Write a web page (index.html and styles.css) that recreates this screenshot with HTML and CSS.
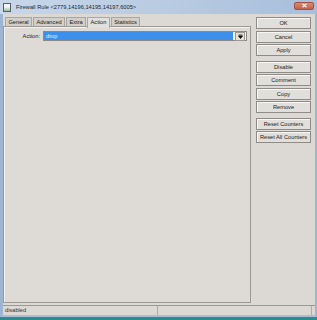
FILE: index.html
```html
<!DOCTYPE html>
<html lang="en">
<head>
    <meta charset="UTF-8">
    <meta name="viewport" content="width=device-width, initial-scale=1.0">
    <title>Firewall Rule</title>
    <link rel="stylesheet" href="styles.css">
</head>
<body>
    <div class="window">
        <div class="titlebar">
            <span class="app-icon"></span>
            <span class="title">Firewall Rule &lt;2779,14196,14195,14197,6005&gt;</span>
            <span class="close-btn">
                <svg width="7" height="5" viewBox="0 0 7 5"><path d="M1.5 0.8 L5.5 4.2 M5.5 0.8 L1.5 4.2" stroke="#fbeeea" stroke-width="1.2"/></svg>
            </span>
        </div>

        <div class="client">
            <div class="main">
                <div class="tabs">
                    <div class="tab">General</div>
                    <div class="tab">Advanced</div>
                    <div class="tab">Extra</div>
                    <div class="tab active">Action</div>
                    <div class="tab">Statistics</div>
                </div>
                <div class="panel">
                    <div class="field-row">
                        <label class="field-label">Action:</label>
                        <div class="select">
                            <span class="select-value">drop</span>
                            <span class="select-arrow">
                                <svg width="5" height="5" viewBox="0 0 5 5"><path d="M0.5 1 H4.5 M0.5 2 L2.5 4.5 L4.5 2 Z" stroke="#111" stroke-width="0.8" fill="#111"/></svg>
                            </span>
                        </div>
                    </div>
                </div>
            </div>

            <div class="sidebar">
                <div class="btn-group">
                    <button class="side-btn">OK</button>
                    <button class="side-btn">Cancel</button>
                    <button class="side-btn">Apply</button>
                </div>
                <div class="btn-group">
                    <button class="side-btn">Disable</button>
                    <button class="side-btn">Comment</button>
                    <button class="side-btn">Copy</button>
                    <button class="side-btn">Remove</button>
                </div>
                <div class="btn-group">
                    <button class="side-btn">Reset Counters</button>
                    <button class="side-btn">Reset All Counters</button>
                </div>
            </div>
        </div>

        <div class="statusbar">
            <div class="status-cell status-main">disabled</div>
            <div class="status-cell status-extra"></div>
            <div class="status-grip"></div>
        </div>
    </div>
    <div class="desktop"></div>
</body>
</html>
```

FILE: styles.css
```css
body {
    margin: 0;
    width: 317px;
    height: 320px;
    overflow: hidden;
    font-family: "Liberation Sans", Arial, sans-serif;
    font-size: 5.7px;
    color: #1a1a1a;
    background-color: #2a8c8c;
}
.window {
    display: flex;
    flex-direction: column;
    height: 315px;
    border-left: 3px solid #9db5d3;
    border-right: 2px solid #9db5d3;
    border-bottom: 2px solid #a9bfd8;
    background-color: #dcd9d4;
}
.titlebar {
    display: flex;
    align-items: center;
    height: 14px;
    margin-left: -3px;
    margin-right: -2px;
    padding: 0 3px 0 3px;
    background: linear-gradient(to right, #c8d7e9, #b5c9e0 60%, #a8bedb);
}
.app-icon {
    width: 6px;
    height: 7px;
    margin-right: 5px;
    border: 1px solid #55606a;
    background: linear-gradient(#f4f6f4 40%, #9fb7a2);
}
.title {
    flex: 1;
    color: #1c2430;
    white-space: nowrap;
}
.close-btn {
    display: flex;
    align-items: center;
    justify-content: center;
    width: 18px;
    height: 6px;
    margin-top: -3px;
    border: 1px solid #a4523f;
    border-radius: 2px;
    background: linear-gradient(#d78b78, #c2604b);
}
.client {
    flex: 1;
    display: flex;
}
.main {
    width: 248px;
    display: flex;
    flex-direction: column;
    margin-bottom: 2px;
}
.tabs {
    display: flex;
    gap: 1px;
    margin-top: 3px;
    padding-left: 2px;
    height: 9px;
}
.tab {
    padding: 0 2.4px;
    line-height: 8px;
    border: 1px solid #aaa7a2;
    border-bottom: none;
    background-color: #d2cfca;
    white-space: nowrap;
}
.tab.active {
    background-color: #e2e0dc;
    position: relative;
    z-index: 1;
    height: 10px;
}
.panel {
    flex: 1;
    border: 1px solid #9c9995;
    box-shadow: inset 1px 1px #f2f1ef;
    background-color: #dedbd7;
    padding: 4px 3px 0 0;
}
.field-row {
    display: flex;
    align-items: center;
    gap: 3px;
    height: 10px;
}
.field-label {
    width: 36px;
    text-align: right;
}
.select {
    flex: 1;
    display: flex;
    align-items: center;
    height: 10px;
    box-sizing: border-box;
    border: 1px solid #8c8984;
    background-color: #f4f3f1;
    padding-right: 1px;
}
.select-value {
    flex: 1;
    height: 8px;
    line-height: 8px;
    padding-left: 2px;
    margin-right: 2px;
    background-color: #3d8fec;
    color: #e8f1fb;
}
.select-arrow {
    display: flex;
    align-items: center;
    justify-content: center;
    width: 8px;
    height: 7px;
    border: 1px solid #9a9792;
    background-color: #e4e2de;
}
.sidebar {
    width: 55px;
    margin: 3px 4px 0 5px;
    display: flex;
    flex-direction: column;
    gap: 4.5px;
}
.btn-group {
    display: flex;
    flex-direction: column;
    gap: 1.5px;
}
.side-btn {
    height: 12px;
    padding: 0;
    font-family: inherit;
    font-size: 5.7px;
    color: #1a1a1a;
    border: 1px solid #8f8c88;
    box-shadow: inset 1px 1px #f7f6f4;
    background-color: #e1dfdb;
    white-space: nowrap;
}
.statusbar {
    display: flex;
    height: 10px;
    border-top: 1px solid #9c9995;
    box-sizing: border-box;
}
.status-cell {
    line-height: 9px;
    padding-left: 2px;
    border-right: 1px solid #b0ada8;
    color: #333;
}
.status-main {
    width: 152px;
}
.status-extra {
    width: 151px;
}
.status-grip {
    flex: 1;
}
```
